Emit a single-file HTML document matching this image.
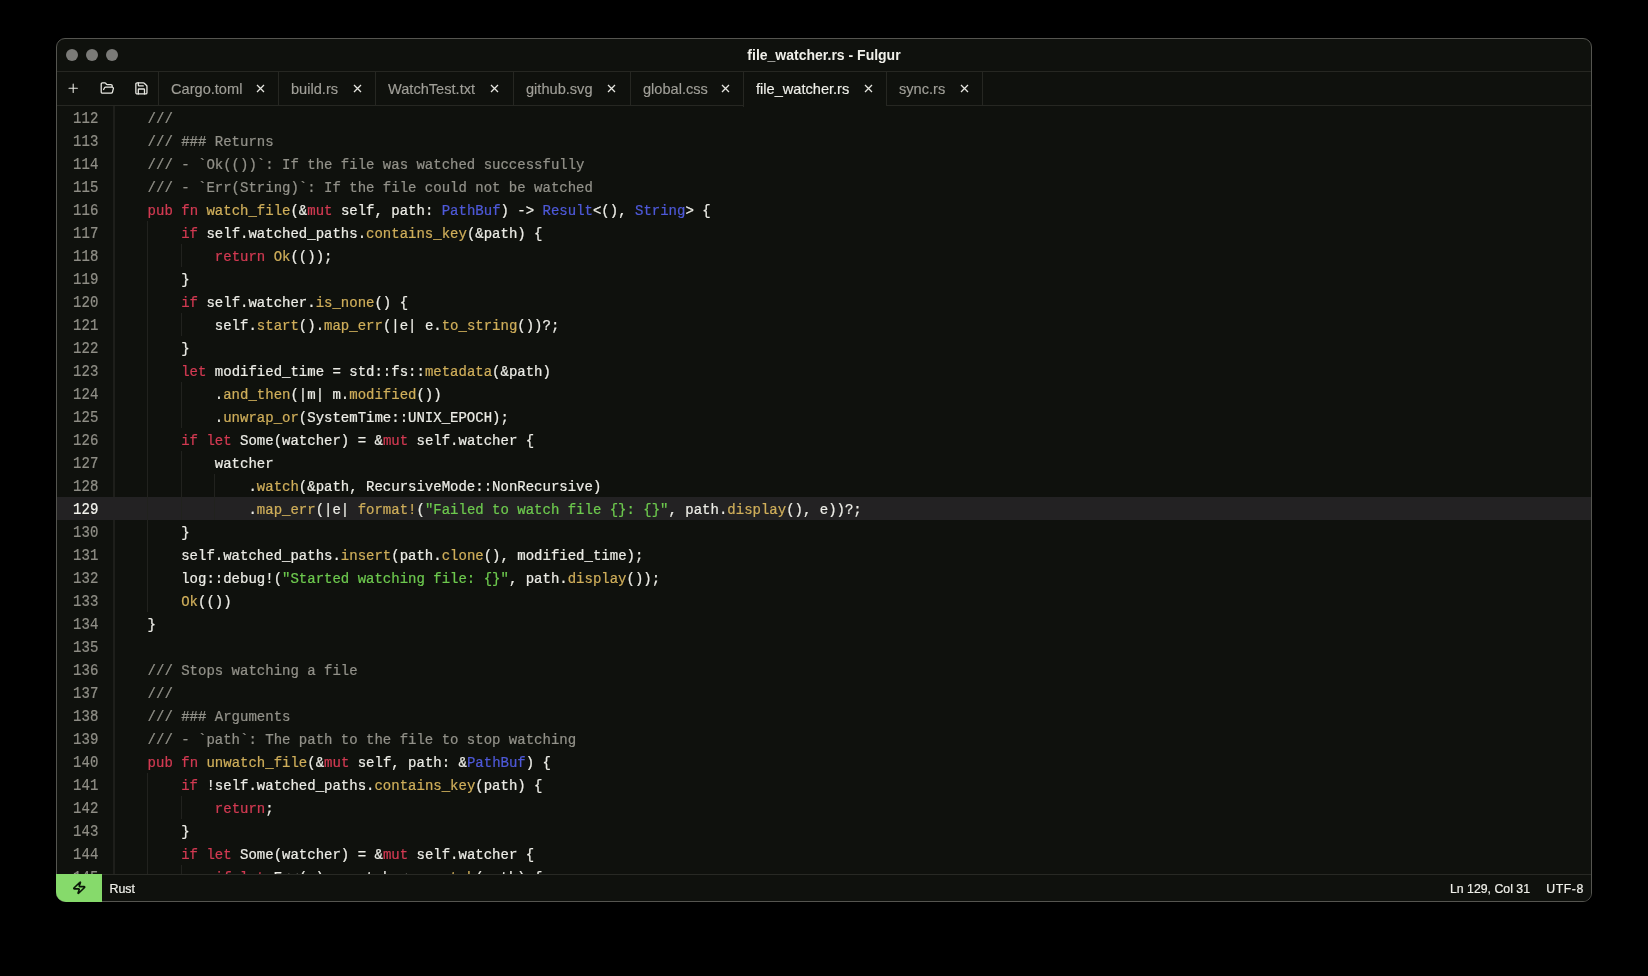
<!DOCTYPE html>
<html><head><meta charset="utf-8">
<style>
*{box-sizing:border-box;margin:0;padding:0}
html,body{width:1648px;height:976px;background:#000;overflow:hidden}
body{font-family:"Liberation Sans",sans-serif;position:relative}
#win,#mode{will-change:transform}
#win{position:absolute;left:56px;top:38px;width:1536px;height:864px;background:#0f110d;border:1px solid #555550;border-radius:9px;overflow:hidden}
#title{position:absolute;left:0;top:0;width:100%;height:33px;border-bottom:1px solid #262722}
.dot{position:absolute;top:10px;width:12px;height:12px;border-radius:50%;background:#7b7b78}
#ttl{position:absolute;left:0;right:0;top:7.5px;text-align:center;color:#f0f0ea;font-size:14px;font-weight:bold}
#tabs{position:absolute;left:0;top:33px;width:100%;height:34px;border-bottom:1px solid #262722}
.tab{position:absolute;top:0;height:34px;border-left:1px solid #262722;color:#a09f98;font-size:14px}
.tab .nm{position:absolute;left:12px;top:8.5px;white-space:nowrap;font-size:14.6px;-webkit-text-stroke:0.15px currentColor}
.tab .x{position:absolute;top:12.4px;width:9px;height:9px;color:#e6e6e0}
.tab.act{background:#0f110d;color:#f0f0ea;height:35px}
#editor{position:absolute;left:0;top:67px;width:100%;height:768px;overflow:hidden}
#gutter{position:absolute;left:0;top:0;width:57px;height:100%}
#gbord{position:absolute;left:56px;top:0;width:2px;height:100%;background:#1e1f1b}
.ln{position:absolute;left:0;width:41.3px;text-align:right;height:23px;line-height:23px;padding-top:1.4px;font-family:"Liberation Mono",monospace;font-size:14px;color:#8f8e86}
.ln.cur{color:#f4f4ee}
.ln{transform:scaleY(1.13);transform-origin:50% 11px}
#hlrow{position:absolute;left:0;top:391px;width:100%;height:23px;background:#232223}
#code{position:absolute;left:57px;top:0;right:0;height:100%}
.cl{position:absolute;left:0;height:23px;line-height:23px;padding-top:2px;white-space:pre;font-family:"Liberation Mono",monospace;font-size:14px;color:#ecece6}
.cl i{font-style:normal}
.cl,.ln{-webkit-text-stroke:0.22px currentColor}
.k{color:#d23a52}.f{color:#cfae5a}.t{color:#4e59d8}.s{color:#6dc94e}.c{color:#929189}
.g{position:absolute;width:1px;background:#21221e}
#status{position:absolute;left:0;top:835px;width:100%;height:28px;border-top:1px solid #282924;background:#0f110d}
#mode{position:absolute;left:56px;top:874px;width:46px;height:28px;background:#86da6b;border-bottom-left-radius:10px}
.ic{position:absolute;width:16px;height:16px;fill:none;stroke:#e8e8e2;stroke-width:2;stroke-linecap:round;stroke-linejoin:round}
#lang,#pos,#enc{-webkit-text-stroke:0.2px currentColor}
#lang{position:absolute;left:52.5px;top:6.5px;color:#f0f0ea;font-size:12.4px}
#pos{position:absolute;right:61px;top:7.2px;color:#f0f0ea;font-size:12.3px;white-space:pre}
#enc{position:absolute;right:7px;top:7.2px;color:#f0f0ea;font-size:12.3px;letter-spacing:0.6px;white-space:pre}
</style></head><body>
<div id="win">
  <div id="title">
    <div class="dot" style="left:9px"></div>
    <div class="dot" style="left:29px"></div>
    <div class="dot" style="left:49px"></div>
    <div id="ttl">file_watcher.rs - Fulgur</div>
  </div>
  <div id="tabs">
    <svg class="ic" style="left:8.7px;top:9.4px;width:14.4px;height:14.4px;stroke-width:1.8" viewBox="0 0 24 24"><path d="M5 12h14M12 5v14"/></svg>
    <svg class="ic" style="left:42.9px;top:9.2px;width:14.6px;height:14.6px;stroke-width:2.1" viewBox="0 0 24 24"><path d="m6 14 1.5-2.9A2 2 0 0 1 9.24 10H20a2 2 0 0 1 1.94 2.5l-1.54 6a2 2 0 0 1-1.950 1.5H4a2 2 0 0 1-2-2V5a2 2 0 0 1 2-2h3.9a2 2 0 0 1 1.69.9l.81 1.2a2 2 0 0 0 1.67.9H18a2 2 0 0 1 2 2v2"/></svg>
    <svg class="ic" style="left:76.6px;top:8.9px;width:14.8px;height:14.8px;stroke-width:2.1" viewBox="0 0 24 24"><path d="M15.2 3a2 2 0 0 1 1.4.6l3.8 3.8a2 2 0 0 1 .6 1.4V19a2 2 0 0 1-2 2H5a2 2 0 0 1-2-2V5a2 2 0 0 1 2-2z"/><path d="M17 21v-7a1 1 0 0 0-1-1H8a1 1 0 0 0-1 1v7"/><path d="M7 3v4a1 1 0 0 0 1 1h7"/></svg>
    <div class="tab" style="left:101.0px;width:120.0px"><span class="nm">Cargo.toml</span><svg class="x" style="right:13.4px" viewBox="0 0 9 9"><path d="M1 1L8 8M8 1L1 8" stroke="currentColor" stroke-width="1.3"/></svg></div>
<div class="tab" style="left:221.0px;width:97.0px"><span class="nm">build.rs</span><svg class="x" style="right:13.4px" viewBox="0 0 9 9"><path d="M1 1L8 8M8 1L1 8" stroke="currentColor" stroke-width="1.3"/></svg></div>
<div class="tab" style="left:318.0px;width:138.0px"><span class="nm">WatchTest.txt</span><svg class="x" style="right:14.4px" viewBox="0 0 9 9"><path d="M1 1L8 8M8 1L1 8" stroke="currentColor" stroke-width="1.3"/></svg></div>
<div class="tab" style="left:456.0px;width:117.0px"><span class="nm">github.svg</span><svg class="x" style="right:14.3px" viewBox="0 0 9 9"><path d="M1 1L8 8M8 1L1 8" stroke="currentColor" stroke-width="1.3"/></svg></div>
<div class="tab" style="left:573.0px;width:113.0px"><span class="nm">global.css</span><svg class="x" style="right:13.4px" viewBox="0 0 9 9"><path d="M1 1L8 8M8 1L1 8" stroke="currentColor" stroke-width="1.3"/></svg></div>
<div class="tab act" style="left:686.0px;width:143.0px"><span class="nm">file_watcher.rs</span><svg class="x" style="right:13.4px" viewBox="0 0 9 9"><path d="M1 1L8 8M8 1L1 8" stroke="currentColor" stroke-width="1.3"/></svg></div>
<div class="tab" style="left:829.0px;width:96.0px"><span class="nm">sync.rs</span><svg class="x" style="right:13.4px" viewBox="0 0 9 9"><path d="M1 1L8 8M8 1L1 8" stroke="currentColor" stroke-width="1.3"/></svg></div>
    <div style="position:absolute;left:925px;top:0;width:1px;height:34px;background:#262722"></div>
  </div>
  <div id="editor">
    <div id="gbord"></div>
    <div id="hlrow"></div>
    <div id="gutter">
<div class="ln" style="top:0px">112</div>
<div class="ln" style="top:23px">113</div>
<div class="ln" style="top:46px">114</div>
<div class="ln" style="top:69px">115</div>
<div class="ln" style="top:92px">116</div>
<div class="ln" style="top:115px">117</div>
<div class="ln" style="top:138px">118</div>
<div class="ln" style="top:161px">119</div>
<div class="ln" style="top:184px">120</div>
<div class="ln" style="top:207px">121</div>
<div class="ln" style="top:230px">122</div>
<div class="ln" style="top:253px">123</div>
<div class="ln" style="top:276px">124</div>
<div class="ln" style="top:299px">125</div>
<div class="ln" style="top:322px">126</div>
<div class="ln" style="top:345px">127</div>
<div class="ln" style="top:368px">128</div>
<div class="ln cur" style="top:391px">129</div>
<div class="ln" style="top:414px">130</div>
<div class="ln" style="top:437px">131</div>
<div class="ln" style="top:460px">132</div>
<div class="ln" style="top:483px">133</div>
<div class="ln" style="top:506px">134</div>
<div class="ln" style="top:529px">135</div>
<div class="ln" style="top:552px">136</div>
<div class="ln" style="top:575px">137</div>
<div class="ln" style="top:598px">138</div>
<div class="ln" style="top:621px">139</div>
<div class="ln" style="top:644px">140</div>
<div class="ln" style="top:667px">141</div>
<div class="ln" style="top:690px">142</div>
<div class="ln" style="top:713px">143</div>
<div class="ln" style="top:736px">144</div>
<div class="ln" style="top:759px">145</div>
    </div>
    <div id="code">
<div class="g" style="left:33px;top:115px;height:391px"></div>
<div class="g" style="left:33px;top:667px;height:115px"></div>
<div class="g" style="left:67px;top:138px;height:23px"></div>
<div class="g" style="left:67px;top:207px;height:23px"></div>
<div class="g" style="left:67px;top:276px;height:46px"></div>
<div class="g" style="left:67px;top:345px;height:69px"></div>
<div class="g" style="left:67px;top:690px;height:23px"></div>
<div class="g" style="left:67px;top:759px;height:23px"></div>
<div class="g" style="left:100px;top:368px;height:46px"></div>
<div class="cl" style="top:0px">    <i class="c">///</i></div>
<div class="cl" style="top:23px">    <i class="c">/// ### Returns</i></div>
<div class="cl" style="top:46px">    <i class="c">/// - `Ok(())`: If the file was watched successfully</i></div>
<div class="cl" style="top:69px">    <i class="c">/// - `Err(String)`: If the file could not be watched</i></div>
<div class="cl" style="top:92px">    <i class="k">pub</i> <i class="k">fn</i> <i class="f">watch_file</i>(&amp;<i class="k">mut</i> self, path: <i class="t">PathBuf</i>) -&gt; <i class="t">Result</i>&lt;(), <i class="t">String</i>&gt; {</div>
<div class="cl" style="top:115px">        <i class="k">if</i> self.watched_paths.<i class="f">contains_key</i>(&amp;path) {</div>
<div class="cl" style="top:138px">            <i class="k">return</i> <i class="f">Ok</i>(());</div>
<div class="cl" style="top:161px">        }</div>
<div class="cl" style="top:184px">        <i class="k">if</i> self.watcher.<i class="f">is_none</i>() {</div>
<div class="cl" style="top:207px">            self.<i class="f">start</i>().<i class="f">map_err</i>(|e| e.<i class="f">to_string</i>())?;</div>
<div class="cl" style="top:230px">        }</div>
<div class="cl" style="top:253px">        <i class="k">let</i> modified_time = std::fs::<i class="f">metadata</i>(&amp;path)</div>
<div class="cl" style="top:276px">            .<i class="f">and_then</i>(|m| m.<i class="f">modified</i>())</div>
<div class="cl" style="top:299px">            .<i class="f">unwrap_or</i>(SystemTime::UNIX_EPOCH);</div>
<div class="cl" style="top:322px">        <i class="k">if</i> <i class="k">let</i> Some(watcher) = &amp;<i class="k">mut</i> self.watcher {</div>
<div class="cl" style="top:345px">            watcher</div>
<div class="cl" style="top:368px">                .<i class="f">watch</i>(&amp;path, RecursiveMode::NonRecursive)</div>
<div class="cl" style="top:391px">                .<i class="f">map_err</i>(|e| <i class="f">format!</i>(<i class="s">&quot;Failed to watch file {}: {}&quot;</i>, path.<i class="f">display</i>(), e))?;</div>
<div class="cl" style="top:414px">        }</div>
<div class="cl" style="top:437px">        self.watched_paths.<i class="f">insert</i>(path.<i class="f">clone</i>(), modified_time);</div>
<div class="cl" style="top:460px">        log::debug!(<i class="s">&quot;Started watching file: {}&quot;</i>, path.<i class="f">display</i>());</div>
<div class="cl" style="top:483px">        <i class="f">Ok</i>(())</div>
<div class="cl" style="top:506px">    }</div>
<div class="cl" style="top:529px"></div>
<div class="cl" style="top:552px">    <i class="c">/// Stops watching a file</i></div>
<div class="cl" style="top:575px">    <i class="c">///</i></div>
<div class="cl" style="top:598px">    <i class="c">/// ### Arguments</i></div>
<div class="cl" style="top:621px">    <i class="c">/// - `path`: The path to the file to stop watching</i></div>
<div class="cl" style="top:644px">    <i class="k">pub</i> <i class="k">fn</i> <i class="f">unwatch_file</i>(&amp;<i class="k">mut</i> self, path: &amp;<i class="t">PathBuf</i>) {</div>
<div class="cl" style="top:667px">        <i class="k">if</i> !self.watched_paths.<i class="f">contains_key</i>(path) {</div>
<div class="cl" style="top:690px">            <i class="k">return</i>;</div>
<div class="cl" style="top:713px">        }</div>
<div class="cl" style="top:736px">        <i class="k">if</i> <i class="k">let</i> Some(watcher) = &amp;<i class="k">mut</i> self.watcher {</div>
<div class="cl" style="top:759px">            <i class="k">if</i> <i class="k">let</i> Err(e) = watcher.<i class="f">unwatch</i>(path) {</div>
    </div>
  </div>
  <div id="status">
        <div id="lang">Rust</div>
    <div id="pos">Ln 129, Col 31</div><div id="enc">UTF-8</div>
  </div>
</div>
<div id="mode"><svg class="ic" style="left:15.6px;top:7.3px;width:14.5px;height:13.5px;stroke:#0b1608;stroke-width:2.7" viewBox="0 0 24 24" preserveAspectRatio="none"><path d="M4 14a1 1 0 0 1-.78-1.63l9.9-10.2a.5.5 0 0 1 .86.46l-1.92 6.020A1 1 0 0 0 13 10h7a1 1 0 0 1 .78 1.63l-9.9 10.2a.5.5 0 0 1-.86-.46l1.92-6.020A1 1 0 0 0 11 14z"/></svg></div>
</body></html>
